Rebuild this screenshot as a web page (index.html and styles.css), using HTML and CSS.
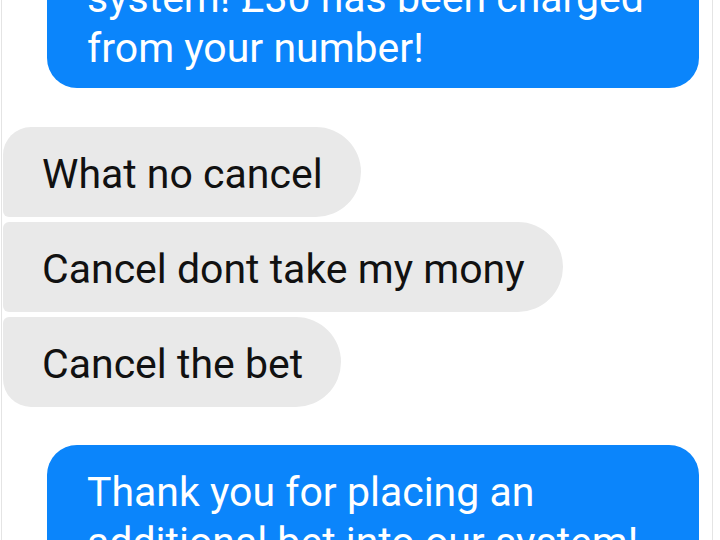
FILE: index.html
```html
<!DOCTYPE html>
<html lang="en">
<head>
    <meta charset="UTF-8">
    <meta name="viewport" content="width=device-width, initial-scale=1.0">
    <title>Messages</title>
    <link rel="stylesheet" href="styles.css">
</head>
<body>
    <div class="screen">
        <!-- Earlier part of the thread, scrolled up -->
        <div class="history">
            <div class="msg out">
                Thank you for placing a bet into our<br>system! £30 has been charged<br>from your number!
            </div>
        </div>

        <!-- Replies -->
        <div class="group in-group">
            <div class="msg in first">What no cancel</div>
            <div class="msg in">Cancel dont take my mony</div>
            <div class="msg in last">Cancel the bet</div>
        </div>

        <div class="group out-group">
            <div class="msg out">
                Thank you for placing an additional bet into our system!
            </div>
        </div>
    </div>
</body>
</html>
```

FILE: styles.css
```css
:root {
    --bg: #ffffff;
    --blue: #0b85fb;
    --bubble-in: #e9e9e9;
    --text-in: #111111;
    --frame: #e4e4e4;
}

html, body {
    margin: 0;
    height: 100%;
    overflow: hidden;
}

body {
    background: var(--bg);
    font-family: Roboto, 'Noto Sans', sans-serif;
}

.screen {
    width: 710px;
    height: 100%;
    margin-left: 1px;
    border-left: 1px solid var(--frame);
    border-right: 1px solid var(--frame);
    display: flex;
    flex-direction: column;
}

.history {
    height: 88px;
    flex-shrink: 0;
    display: flex;
    flex-direction: column;
    justify-content: flex-end;
    overflow: hidden;
}

.group {
    display: flex;
    flex-direction: column;
    gap: 5px;
}

.in-group {
    margin-top: 39px;
    align-items: flex-start;
}

.out-group {
    margin-top: 38px;
}

.msg {
    font-size: 41px;
    line-height: 50px;
    box-sizing: border-box;
}

.msg.out {
    align-self: flex-end;
    width: 652px;
    margin-right: 13px;
    padding: 22px 40px 15px 40px;
    background: var(--blue);
    color: #fff;
    border-radius: 30px;
}

.msg.in {
    margin-left: 1px;
    padding: 22px 38px 18px 39px;
    background: var(--bubble-in);
    color: var(--text-in);
    border-radius: 6px 45px 45px 6px;
}

.msg.in.first {
    border-top-left-radius: 28px;
}

.msg.in.last {
    border-bottom-left-radius: 28px;
}
```
